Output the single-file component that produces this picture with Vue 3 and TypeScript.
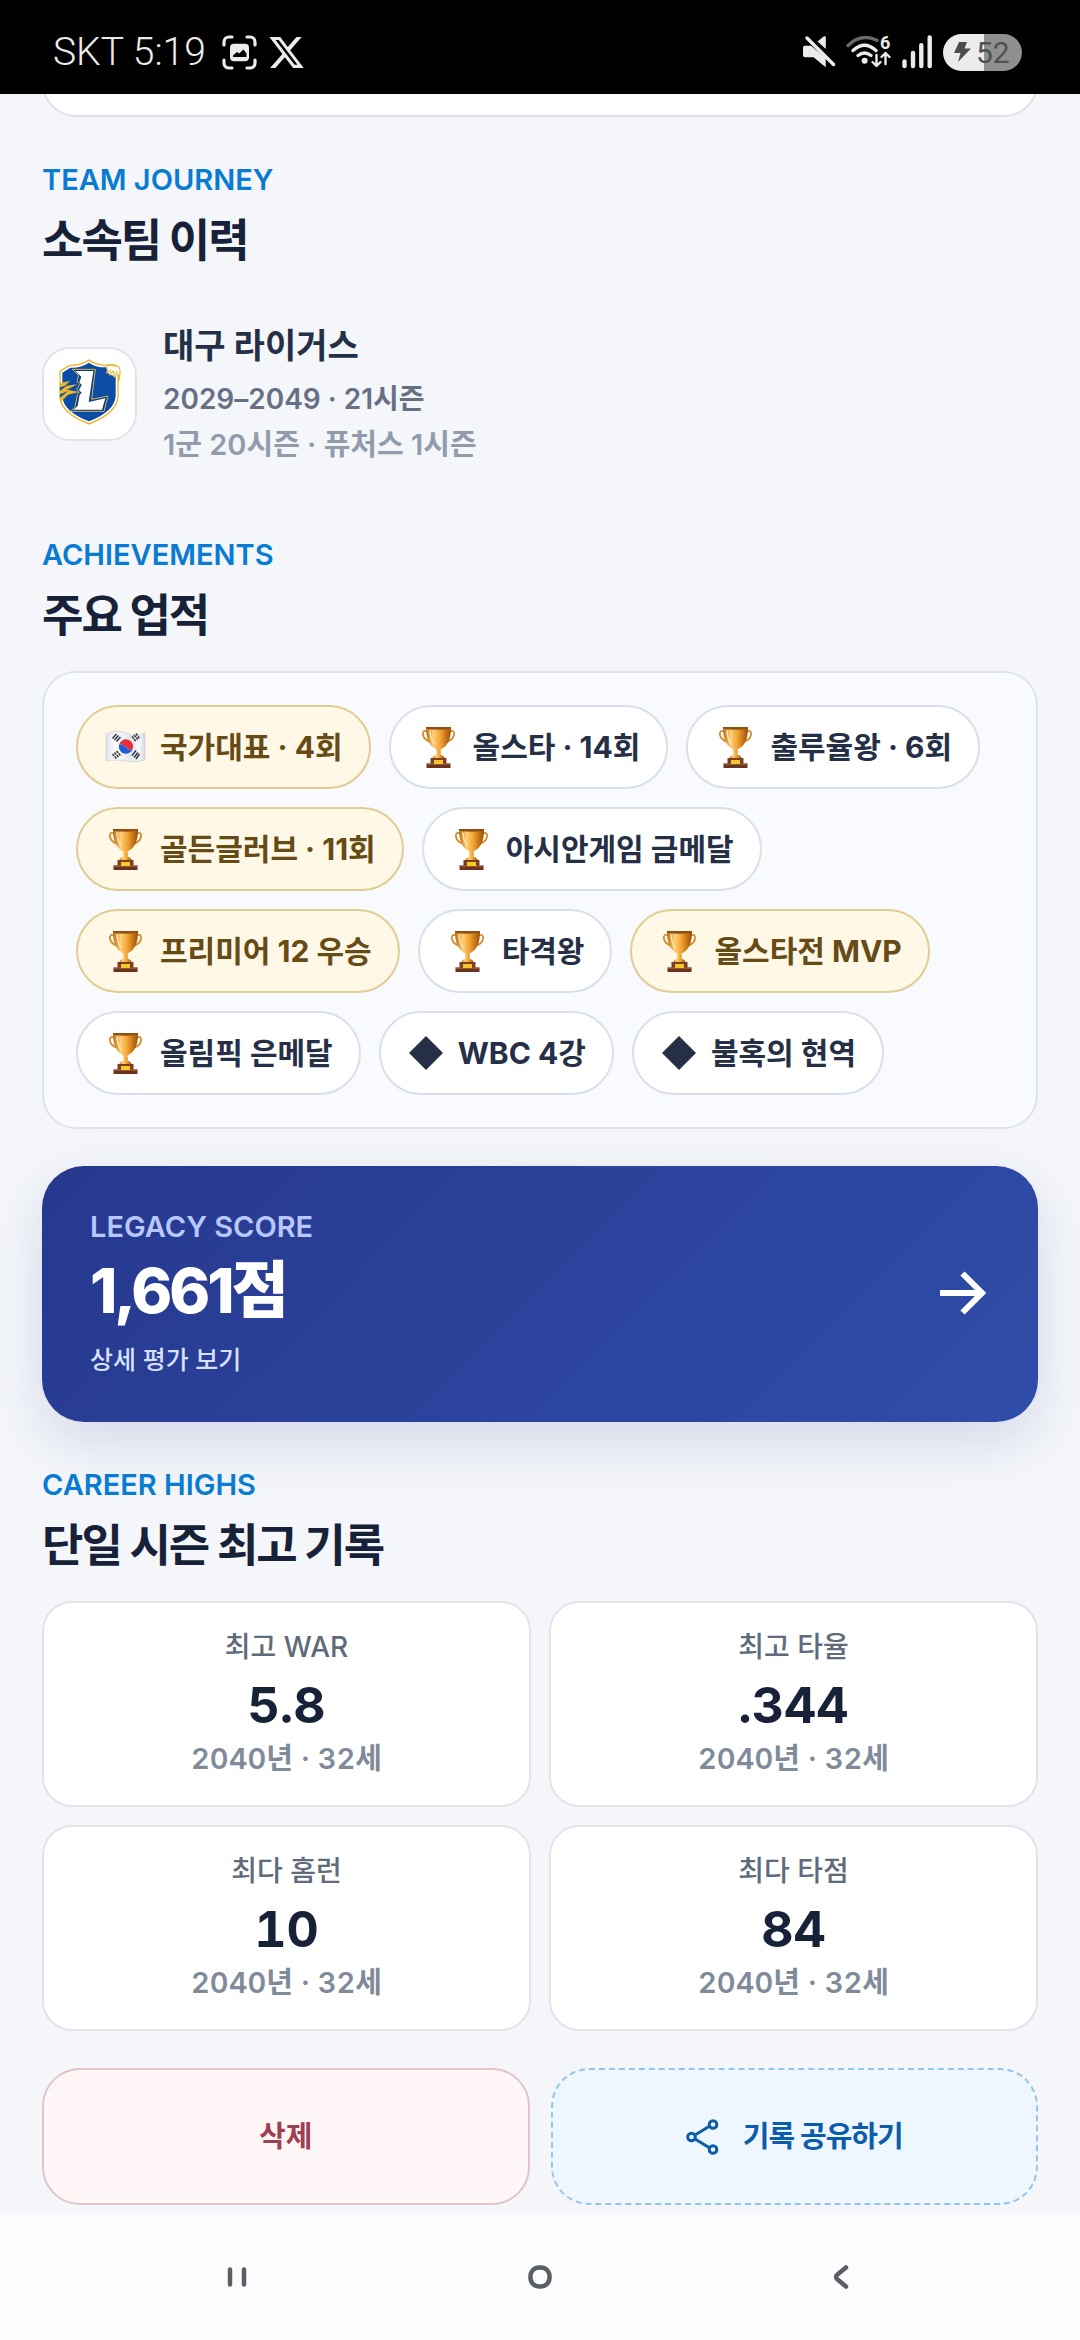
<script setup lang="ts">
type IconName = 'flag' | 'trophy' | 'diamond'

interface Achievement {
  icon: IconName
  label: string
  gold?: boolean
}

interface CareerHigh {
  label: string
  value: string
  when: string
}

const achievements: Achievement[] = [
  { icon: 'flag', label: '국가대표 · 4회', gold: true },
  { icon: 'trophy', label: '올스타 · 14회' },
  { icon: 'trophy', label: '출루율왕 · 6회' },
  { icon: 'trophy', label: '골든글러브 · 11회', gold: true },
  { icon: 'trophy', label: '아시안게임 금메달' },
  { icon: 'trophy', label: '프리미어 12 우승', gold: true },
  { icon: 'trophy', label: '타격왕' },
  { icon: 'trophy', label: '올스타전 MVP', gold: true },
  { icon: 'trophy', label: '올림픽 은메달' },
  { icon: 'diamond', label: 'WBC 4강' },
  { icon: 'diamond', label: '불혹의 현역' },
]

const careerHighs: CareerHigh[] = [
  { label: '최고 WAR', value: '5.8', when: '2040년 · 32세' },
  { label: '최고 타율', value: '.344', when: '2040년 · 32세' },
  { label: '최다 홈런', value: '10', when: '2040년 · 32세' },
  { label: '최다 타점', value: '84', when: '2040년 · 32세' },
]
</script>

<template>
  <div class="screen">
    <svg class="defs" width="0" height="0" aria-hidden="true">
      <defs>
        <linearGradient id="cup" x1="0" x2="1" y1="0" y2="0">
          <stop offset="0" stop-color="#b9690f" />
          <stop offset="0.3" stop-color="#ffd07a" />
          <stop offset="0.6" stop-color="#f09f2c" />
          <stop offset="1" stop-color="#9a4c08" />
        </linearGradient>
        <linearGradient id="cloth" x1="0" x2="1" y1="0" y2="0">
          <stop offset="0" stop-color="#dfe1e6" />
          <stop offset="0.25" stop-color="#fdfdfe" />
          <stop offset="0.62" stop-color="#e4e6ea" />
          <stop offset="0.85" stop-color="#f8f8fa" />
          <stop offset="1" stop-color="#d3d6dc" />
        </linearGradient>
      </defs>
    </svg>

    <header class="status">
      <div class="status-side">
        <span class="clock">SKT 5:19</span>
        <svg class="capture" width="35" height="35" viewBox="0 0 35 35" aria-hidden="true">
          <path d="M2 10V7a5 5 0 0 1 5-5h3M25 2h3a5 5 0 0 1 5 5v3M33 25v3a5 5 0 0 1-5 5h-3M10 33H7a5 5 0 0 1-5-5v-3" fill="none" stroke="#ececec" stroke-width="3.2" stroke-linecap="round" />
          <rect x="8" y="8.700" width="19" height="17.600" rx="4" fill="#ececec" />
          <path d="M11 20.500l4-3.500 2.200 1.600 4.300-4.200 3 4V22H11z" fill="#000" />
        </svg>
        <svg width="35" height="33" viewBox="1 2 22 20" aria-hidden="true">
          <path d="M18.244 2.250h3.308l-7.227 8.260 8.502 11.240H16.170l-5.214-6.817L4.990 21.750H1.680l7.730-8.835L1.254 2.250H8.080l4.713 6.231zm-1.161 17.520h1.833L7.084 4.126H5.117z" fill="#ececec" />
        </svg>
      </div>
      <div class="status-side right">
        <svg width="33" height="33" viewBox="0 0 33 33" aria-hidden="true">
          <path d="M2 9.700h6L22.700 22v9.300L10.500 21.300H2q-2 0-2-2v-7.600q0-2 2-2z" fill="#ececec" />
          <path d="M14.500 5.600L20.600.6q2.200-1.200 2.200 1V13z" fill="#ececec" />
          <path d="M4 2l26.500 26.500" stroke="#ececec" stroke-width="3.400" stroke-linecap="round" />
        </svg>
        <svg width="46" height="45" viewBox="0 -6 46 45" aria-hidden="true">
          <g fill="none" stroke-linecap="round" stroke-width="3.400">
            <path d="M2 9.500Q15-3 31 4.200" stroke="#6a6a6a" />
            <path d="M7 14.500Q18.500 4 30 14.500" stroke="#ececec" />
            <path d="M12 19.500q6.500-5 13 0" stroke="#ececec" />
          </g>
          <circle cx="18.600" cy="24.700" r="3" fill="#ececec" />
          <path d="M30.500 19v10.500M26.500 26l4 4 4-4M39.500 28V17.500M35.500 21l4-4 4 4" fill="none" stroke="#ececec" stroke-width="2.400" stroke-linecap="round" stroke-linejoin="round" />
          <text x="34" y="13" class="wifi-gen">6</text>
        </svg>
        <svg width="31" height="34" viewBox="0 0 31 34" aria-hidden="true">
          <path d="M2.500 26.500v4.500M11 18v13M19.300 10.300V31M27.700 2.500V31" stroke="#ececec" stroke-width="4.400" stroke-linecap="round" />
        </svg>
        <span class="battery">
          <svg width="17" height="20" viewBox="0 0 17 20" aria-hidden="true">
            <path d="M5 0h8l-2.500 6.500H17L4 20l2.500-9H0z" fill="#4c4c50" />
          </svg>
          52
        </span>
      </div>
    </header>

    <main class="content">
      <div class="previous-card"></div>

      <section>
        <div class="heading">
          <p class="eyebrow">TEAM JOURNEY</p>
          <h2>소속팀 이력</h2>
        </div>
        <div class="team">
          <span class="team-badge">
            <svg width="64" height="72" viewBox="84 84 192 216" role="img" aria-label="대구 라이거스">
              <path d="M177 88Q150 106 118 104L88 123V202Q92 252 177 284Q262 252 266 202V158Q276 134 268 110Q252 96 226 104Q196 102 177 88Z" fill="#edb72d" />
              <path d="M177 93Q150 110 120 108L92 125V201Q97 249 177 279Q257 249 262 202V150L264 118Q250 102 226 108Q196 107 177 93Z" fill="#fff" />
              <path d="M177 98Q150 115 121 113L97 128V200Q101 245 177 274Q252 245 257 200V140L236 132L228 112Q198 113 177 98Z" fill="#0b4da6" />
              <path d="M89 160L121 152L104 168L142 163L111 179L148 186L114 194L90 218Z" fill="#edb72d" />
              <path d="M90 172l22-6-22 16zM90 193l24-10-24 20z" fill="#0b4da6" />
              <path d="M228 108Q244 103 252 108Q266 106 270 120Q272 132 263 140L260 124L252 142L250 122L240 136L241 119L230 130Q236 116 228 108Z" fill="#fff" stroke="#edb72d" stroke-width="3" stroke-linejoin="round" />
              <path d="M127 118H196L185 208L234 198L222 244H122L135 232L142 194L148 186L140 180L149 162L141 155L146 136Z" fill="#0b3f8a" stroke="#d9b24b" stroke-width="3" />
              <path d="M136 123H190L176 216L226 205L216 239H130L143 228L149 194L155 188L147 180L155 165L148 157L154 140Z" fill="#fff" />
            </svg>
          </span>
          <div>
            <h3>대구 라이거스</h3>
            <p class="years">2029–2049 · 21시즌</p>
            <p class="split">1군 20시즌 · 퓨처스 1시즌</p>
          </div>
        </div>
      </section>

      <section>
        <div class="heading">
          <p class="eyebrow">ACHIEVEMENTS</p>
          <h2>주요 업적</h2>
        </div>
        <ul class="chips">
          <li v-for="item in achievements" :key="item.label" class="chip" :class="{ gold: item.gold }">
            <svg v-if="item.icon === 'flag'" width="41" height="42" viewBox="0 0 41 42" aria-hidden="true">
              <path d="M1 8Q11 3 21 7T40 7V34Q31 37 21 35T1 35Z" fill="url(#cloth)" stroke="#cfd2d8" stroke-width="0.800" />
              <path d="M14 19a7 7 0 0 1 14 3q-3.500 4-7-.500T14 19z" fill="#e8303c" />
              <path d="M14 19q3.500-2 7 2.500t7 .500a7 7 0 1 1-14-3z" fill="#1a5fd8" />
              <g stroke="#33363c" stroke-width="1.500">
                <path d="M7.500 12.500l4-4.500M9.500 14l4-4.500M11.500 15.500l4-4.500" />
                <path d="M27 10.500l4 5M29 9l4 5M31 7.500l3.500 5" stroke-dasharray="2.600 0.700" />
                <path d="M7.500 28l4 4.500M9.500 26.500l4 4.500M11.500 25l4 4.500" stroke-dasharray="2.600 0.700" />
                <path d="M27 29.500l4-5M29 31.500l4-5M31 33l3.500-5" />
              </g>
            </svg>
            <svg v-else-if="item.icon === 'trophy'" width="41" height="42" viewBox="0 0 41 42" aria-hidden="true">
              <path d="M9.500 5.500Q4 3.500 5 9t9 7M31.500 5.500Q37 3.500 36 9t-9 7" fill="none" stroke="#d58c2c" stroke-width="1.800" />
              <path d="M8 1.500h25Q33 18 24 22.500q-2 1.500-2 3h-3q0-1.500-2-3Q8 18 8 1.500z" fill="url(#cup)" />
              <path d="M8 1h25v1.800Q20.500 4.500 8 2.800z" fill="#8f5210" />
              <path d="M12 5q.500 8 4 12.500" fill="none" stroke="#ffe9b4" stroke-width="1.400" stroke-linecap="round" />
              <path d="M18 25h5l-.500 3.500Q26 29.500 27 32.500H14q1-3 4.500-4z" fill="url(#cup)" />
              <path d="M12.500 32h16v6h-16z" fill="#7c3f22" />
              <path d="M8.500 37.500h24V42h-24z" fill="#6a3320" />
              <path d="M8.500 37.500h24v1.200h-24z" fill="#a5663e" />
              <path d="M16 34h9v4h-9z" fill="#f5c928" />
            </svg>
            <svg v-else width="36" height="34" viewBox="0 0 36 34" aria-hidden="true">
              <path d="M18 0l17 17-17 17L1 17z" fill="currentColor" />
            </svg>
            <span>{{ item.label }}</span>
          </li>
        </ul>
      </section>

      <button type="button" class="legacy">
        <span class="legacy-text">
          <span class="legacy-label">LEGACY SCORE</span>
          <strong>1,661점</strong>
          <span class="legacy-more">상세 평가 보기</span>
        </span>
        <svg width="48" height="44" viewBox="0 0 48 44" aria-hidden="true">
          <path d="M2 22h41M24.500 2.500L44 22 24.500 41.500" fill="none" stroke="#fff" stroke-width="6" />
        </svg>
      </button>

      <section>
        <div class="heading">
          <p class="eyebrow">CAREER HIGHS</p>
          <h2>단일 시즌 최고 기록</h2>
        </div>
        <div class="highs">
          <article v-for="high in careerHighs" :key="high.label" class="high">
            <p class="high-label">{{ high.label }}</p>
            <p class="high-value">{{ high.value }}</p>
            <p class="high-when">{{ high.when }}</p>
          </article>
        </div>
      </section>

      <div class="actions">
        <button type="button" class="action delete">삭제</button>
        <button type="button" class="action share">
          <svg width="33" height="36" viewBox="0 0 33 36" fill="none" stroke="currentColor" stroke-width="3" aria-hidden="true">
            <path d="M9 16l14-8.500M9 20l14 8.500" />
            <circle cx="5.500" cy="18" r="3.800" />
            <circle cx="27" cy="5.500" r="3.800" />
            <circle cx="27" cy="30.500" r="3.800" />
          </svg>
          기록 공유하기
        </button>
      </div>
    </main>

    <nav class="system-nav">
      <button type="button" aria-label="최근 앱">
        <svg width="24" height="24" viewBox="0 0 24 24"><path d="M5 4.500v15M19 4.500v15" /></svg>
      </button>
      <button type="button" aria-label="홈">
        <svg width="24" height="24" viewBox="0 0 24 24"><rect x="2.500" y="2.500" width="19" height="19" rx="8.500" /></svg>
      </button>
      <button type="button" aria-label="뒤로">
        <svg width="24" height="24" viewBox="0 0 24 24"><path d="M15 2.500L6.500 9.500q-3 2.500 0 5L15 21.500" /></svg>
      </button>
    </nav>
  </div>
</template>

<style>
body {
  margin: 0;
  background: #f4f6fa;
}
</style>

<style scoped>
.screen {
  display: flex;
  flex-direction: column;
  min-height: 100vh;
  background: #f4f6fa;
  color: #172238;
  font-family: Inter, "Noto Sans CJK KR", sans-serif;
}

.defs {
  position: absolute;
}

h2,
h3,
p,
ul {
  margin: 0;
  padding: 0;
}

button {
  font-family: inherit;
  cursor: pointer;
}

svg {
  display: block;
  flex: none;
}

.status {
  display: flex;
  justify-content: space-between;
  align-items: center;
  box-sizing: border-box;
  height: 94px;
  padding: 10px 58px 0 53px;
  background: #000;
  color: #ececec;
}

.status-side {
  display: flex;
  align-items: center;
  gap: 12px;
}

.status-side.right {
  gap: 10px;
}

.clock {
  font: 300 39px/48px Roboto, sans-serif;
}

.capture {
  margin-left: 4px;
}

.wifi-gen {
  font: 700 18px Roboto, sans-serif;
  fill: #ececec;
}

.battery {
  display: flex;
  align-items: center;
  gap: 5px;
  box-sizing: border-box;
  width: 79px;
  height: 37px;
  padding-left: 11px;
  border-radius: 19px;
  background: linear-gradient(90deg, #ececec 52%, #8f8f8f 52%);
  color: #505055;
  font: 400 30px/37px Roboto, sans-serif;
}

.content {
  flex: 1;
  padding: 0 42px 8px;
  overflow: hidden;
}

.previous-card {
  box-sizing: border-box;
  height: 80px;
  margin-top: -57px;
  border: 2px solid #dde2e9;
  border-radius: 34px;
  background: #fff;
}

.heading {
  padding: 43px 0 25px;
}

.eyebrow {
  margin-bottom: 11px;
  color: #087bd3;
  font-size: 29px;
  font-weight: 600;
  line-height: 40px;
}

h2 {
  font-size: 45px;
  font-weight: 700;
  line-height: 60px;
  letter-spacing: -2px;
}

.team {
  display: flex;
  align-items: center;
  gap: 26px;
  padding: 24px 0;
}

.team-badge {
  display: flex;
  align-items: center;
  justify-content: center;
  box-sizing: border-box;
  width: 95px;
  height: 94px;
  border: 2px solid #e0e4ed;
  border-radius: 28px;
  background: #fff;
}

h3 {
  margin-bottom: 4px;
  color: #253047;
  font-size: 34px;
  font-weight: 700;
  line-height: 52px;
}

.years,
.split {
  font-size: 28px;
  font-weight: 600;
  line-height: 46px;
}

.years {
  color: #667085;
}

.split {
  color: #929bab;
  font-size: 29px;
}

.chips {
  display: flex;
  flex-wrap: wrap;
  gap: 18px;
  padding: 32px;
  border: 2px solid #dfe4ea;
  border-radius: 34px;
  background: #f8fafe;
  list-style: none;
}

.chip {
  display: flex;
  align-items: center;
  gap: 14px;
  box-sizing: border-box;
  height: 84px;
  padding: 0 26px 0 27px;
  border: 2px solid #d9e0e9;
  border-radius: 42px;
  background: #fff;
  color: #253047;
  font-size: 30px;
  font-weight: 700;
  line-height: 40px;
  white-space: nowrap;
}

.chip.gold {
  border-color: #e2cc93;
  background: #fff8e6;
  color: #664b16;
}

.legacy {
  display: flex;
  align-items: center;
  justify-content: space-between;
  width: 100%;
  margin-top: 37px;
  padding: 41px 52px 43px 48px;
  border: 0;
  border-radius: 42px;
  background: linear-gradient(135deg, #26388e, #304da9);
  box-shadow: 0 20px 56px rgba(38, 57, 140, 0.15);
  color: #fff;
  text-align: left;
}

.legacy-text {
  display: flex;
  flex-direction: column;
}

.legacy-label {
  color: #b9c7ff;
  font-size: 29px;
  font-weight: 600;
  line-height: 40px;
}

.legacy strong {
  margin: 8px 0 14px;
  font-size: 62px;
  font-weight: 800;
  line-height: 72px;
  letter-spacing: -3px;
}

.legacy-more {
  color: #d8e0ff;
  font-size: 25px;
  font-weight: 500;
  line-height: 38px;
}

.highs {
  display: grid;
  grid-template-columns: 1fr 1fr;
  gap: 18px;
}

.high {
  padding: 24px 20px 26px;
  border: 2px solid #e0e4ec;
  border-radius: 30px;
  background: #fff;
  text-align: center;
  font-variant-numeric: tabular-nums;
}

.high-label {
  color: #606a7b;
  font-size: 28px;
  font-weight: 500;
  line-height: 40px;
}

.high-value {
  margin: 8px 0 4px;
  font-size: 50px;
  font-weight: 700;
  line-height: 60px;
}

.high-when {
  color: #808a99;
  font-size: 29px;
  font-weight: 600;
  line-height: 40px;
}

.actions {
  display: grid;
  grid-template-columns: 1fr 1fr;
  gap: 21px;
  margin-top: 37px;
}

.action {
  display: flex;
  align-items: center;
  justify-content: center;
  gap: 24px;
  height: 137px;
  border-radius: 38px;
  font-size: 29px;
  font-weight: 700;
  line-height: 40px;
}

.delete {
  border: 2px solid #e3c4cb;
  background: #fff6f7;
  color: #9e3f54;
}

.share {
  border: 2px dashed #93c4ec;
  background: #eef7ff;
  color: #0b5cab;
  letter-spacing: -1px;
}

.system-nav {
  display: flex;
  align-items: center;
  justify-content: space-between;
  box-sizing: border-box;
  height: 127px;
  padding: 0 200px;
  background: #fcfcfe;
}

.system-nav button {
  display: flex;
  align-items: center;
  justify-content: center;
  width: 74px;
  height: 74px;
  padding: 0;
  border: 0;
  background: none;
}

.system-nav svg {
  fill: none;
  stroke: #5a5f62;
  stroke-width: 4.5px;
  stroke-linecap: round;
  stroke-linejoin: round;
}
</style>
